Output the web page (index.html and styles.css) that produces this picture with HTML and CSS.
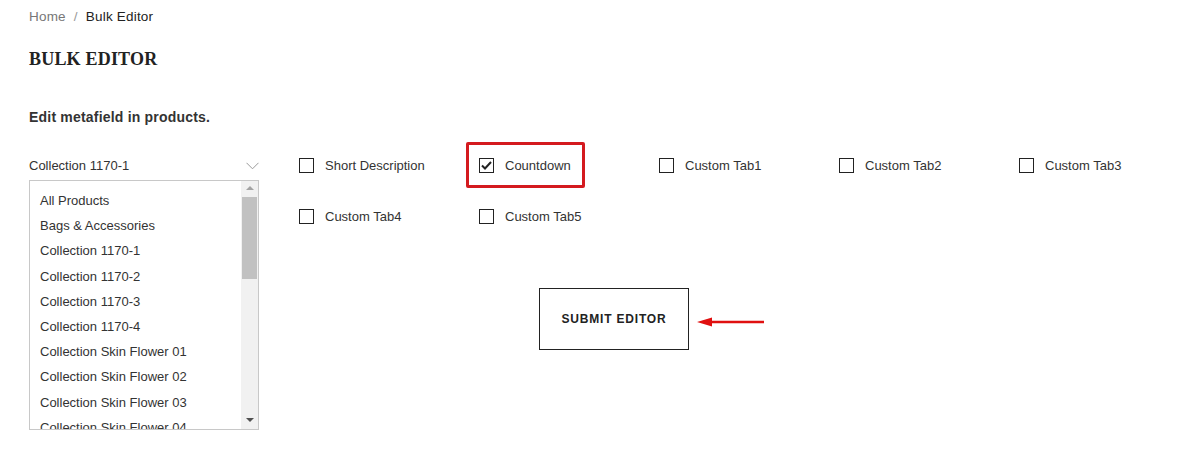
FILE: index.html
```html
<!DOCTYPE html>
<html lang="en">
<head>
<meta charset="utf-8">
<title>Bulk Editor</title>
<link rel="stylesheet" href="styles.css">
</head>
<body>
<div class="page">
  <nav class="breadcrumb">
    <span class="crumb-home">Home</span>
    <span class="crumb-sep">/</span>
    <span class="crumb-current">Bulk Editor</span>
  </nav>
  <h1 class="title">BULK EDITOR</h1>
  <p class="intro">Edit metafield in products.</p>

  <div class="editor">
    <div class="picker">
      <div class="select-head">
        <span>Collection 1170-1</span>
        <svg class="chev" width="13" height="8" viewBox="0 0 13 8"><path d="M0.5 0.8 L6.5 6.8 L12.5 0.8" fill="none" stroke="#9a9a9a" stroke-width="1"/></svg>
      </div>
      <div class="listbox">
        <ul class="options">
          <li>All Products</li>
          <li>Bags &amp; Accessories</li>
          <li>Collection 1170-1</li>
          <li>Collection 1170-2</li>
          <li>Collection 1170-3</li>
          <li>Collection 1170-4</li>
          <li>Collection Skin Flower 01</li>
          <li>Collection Skin Flower 02</li>
          <li>Collection Skin Flower 03</li>
          <li>Collection Skin Flower 04</li>
        </ul>
        <div class="scrollbar">
          <span class="arrow-up"></span>
          <span class="thumb"></span>
          <span class="track-fill"></span>
          <span class="arrow-down"></span>
        </div>
      </div>
    </div>

    <div class="fields">
      <div class="checks">
        <label class="check"><span class="box"></span><span>Short Description</span></label>
        <label class="check highlighted"><span class="box checked"><svg width="11" height="9" viewBox="0 0 11 9"><path d="M1 4.5 L4 7.5 L10 1" fill="none" stroke="#222" stroke-width="2"/></svg></span><span>Countdown</span></label>
        <label class="check"><span class="box"></span><span>Custom Tab1</span></label>
        <label class="check"><span class="box"></span><span>Custom Tab2</span></label>
        <label class="check"><span class="box"></span><span>Custom Tab3</span></label>
        <label class="check"><span class="box"></span><span>Custom Tab4</span></label>
        <label class="check"><span class="box"></span><span>Custom Tab5</span></label>
      </div>
      <div class="actions">
        <button class="submit">SUBMIT EDITOR</button>
        <svg class="pointer" width="68" height="10" viewBox="0 0 68 10"><path d="M0 5 L15 0.5 L15 3.8 L67 3.8 L67 6.2 L15 6.2 L15 9.5 Z" fill="#e01010"/></svg>
      </div>
    </div>
  </div>
</div>
</body>
</html>
```

FILE: styles.css
```css
*, *::before, *::after { box-sizing: border-box; }
body {
  margin: 0;
  background: #fff;
  font-family: "Liberation Sans", Arial, sans-serif;
  color: #333;
  font-size: 13px;
}
.page {
  padding: 8px 29px 0 29px;
}
.breadcrumb {
  display: flex;
  gap: 8px;
  height: 17px;
  line-height: 17px;
  font-size: 13.5px;
  letter-spacing: 0.2px;
}
.crumb-home { color: #777; }
.crumb-sep { color: #999; }
.crumb-current { color: #222; }
.title {
  margin: 24px 0 0 0;
  font-family: "Liberation Serif", "Times New Roman", serif;
  font-weight: bold;
  font-size: 18px;
  line-height: 20px;
  color: #222;
  letter-spacing: 0.2px;
}
.intro {
  margin: 40px 0 0 0;
  font-weight: bold;
  font-size: 14px;
  letter-spacing: 0.2px;
  line-height: 17px;
  color: #333;
}
.editor {
  display: flex;
  margin-top: 31px;
  gap: 40px;
}
.picker { width: 230px; flex: none; }
.select-head {
  display: flex;
  justify-content: space-between;
  align-items: center;
  height: 17px;
  line-height: 17px;
  color: #333;
}
.chev { margin-top: 1px; }
.listbox {
  margin-top: 6px;
  height: 250px;
  border: 1px solid #c8c8c8;
  display: flex;
  overflow: hidden;
}
.options {
  list-style: none;
  margin: 0;
  padding: 7px 0 0 10px;
  flex: 1;
  color: #333;
  overflow: hidden;
}
.options li {
  height: 25.2px;
  line-height: 25.2px;
  white-space: nowrap;
}
.scrollbar {
  width: 17px;
  flex: none;
  background: #f1f1f1;
  display: flex;
  flex-direction: column;
  align-items: center;
}
.arrow-up {
  margin-top: 5px;
  width: 0; height: 0;
  border-left: 4px solid transparent;
  border-right: 4px solid transparent;
  border-bottom: 4px solid #a3a3a3;
}
.thumb {
  margin-top: 7px;
  width: 15px;
  height: 82px;
  background: #c1c1c1;
}
.track-fill { flex: 1; }
.arrow-down {
  margin-bottom: 7px;
  width: 0; height: 0;
  border-left: 4px solid transparent;
  border-right: 4px solid transparent;
  border-top: 4px solid #505050;
}
.fields { flex: 1; }
.checks {
  display: grid;
  grid-template-columns: repeat(5, 180px);
  row-gap: 34px;
}
.check {
  position: relative;
  display: flex;
  align-items: center;
  gap: 11px;
  height: 17px;
  color: #333;
  white-space: nowrap;
}
.box {
  width: 15px;
  height: 15px;
  border: 1px solid #222;
  display: flex;
  align-items: center;
  justify-content: center;
  flex: none;
}
.highlighted::after {
  content: "";
  position: absolute;
  left: -13px;
  top: -15px;
  width: 119px;
  height: 46px;
  border: 3px solid #d41a1f;
  border-radius: 2px;
}
.actions {
  display: flex;
  align-items: center;
  margin-top: 63px;
  margin-left: 240px;
  gap: 8px;
}
.submit {
  width: 150px;
  height: 62px;
  background: #fff;
  border: 1px solid #222;
  font-family: "Liberation Sans", Arial, sans-serif;
  font-weight: bold;
  font-size: 12px;
  letter-spacing: 0.8px;
  color: #222;
  padding: 0;
}
.pointer { margin-top: 6px; }
```
